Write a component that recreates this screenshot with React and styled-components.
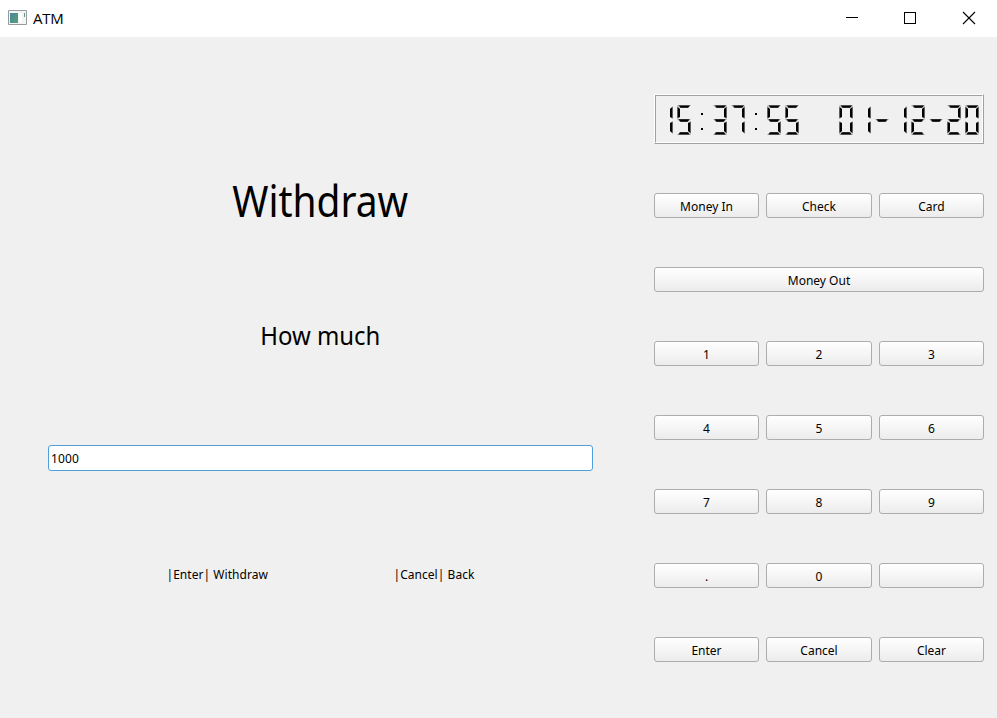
import React from "react";
import styled, { createGlobalStyle } from "styled-components";

const Global = createGlobalStyle`
  * { box-sizing: border-box; }
  body { margin: 0; background: #f0f0f0; color: #000; font-family: "Noto Sans", sans-serif; font-size: 12px; }
`;
const Window = styled.div`width: 997px; height: 718px; display: flex; flex-direction: column; overflow: hidden;`;
const TitleBar = styled.header`height: 37px; background: #fff; display: flex; align-items: flex-start; padding-left: 8px;`;
const AppIcon = styled.svg`display: block; margin: 10px 6px 0 0;`;
const Title = styled.span`flex: 1; font: 15px/36px "Open Sans", sans-serif; letter-spacing: -0.3px;`;
const Caption = styled.svg`display: block;`;
const Body = styled.main`height: 681px; display: flex;`;
const Screen = styled.section`width: 545px; margin-left: 48px; display: flex; flex-direction: column; align-items: center;`;
const Label = styled.div`
  font-size: ${(p) => p.$size}px; line-height: ${(p) => p.$height}px; margin-top: ${(p) => p.$top}px;
  transform: scaleX(${(p) => p.$stretch}); white-space: pre;
`;
const Field = styled.input`
  width: 545px; height: 26px; margin-top: 92px; padding: 1px 2px 0; border: 1px solid #4f9fdc; border-radius: 3px;
  background: #fff; color: #000; font: 12px "Noto Sans", sans-serif; letter-spacing: 0.15px; outline: none;
`;
const Hints = styled.div`width: 545px; margin-top: 94px; display: flex; padding-left: 118.5px; line-height: 20px; white-space: pre;`;
const Hint = styled.span`width: 227px; flex: none; letter-spacing: 0.04px;`;
const Panel = styled.section`
  width: 330px; margin-left: 61px; padding-top: 57px; display: flex; flex-direction: column;
`;
const Display = styled.div`
  height: 50px; margin-bottom: 49px; border: 1px solid; border-color: #fff #a0a0a0 #a0a0a0 #fff;
  display: flex;
`;
const Inner = styled.div`flex: 1; border: 1px solid; border-color: #a0a0a0 #fff #fff #a0a0a0;`;
const Digits = styled.svg`display: block;`;
const Keys = styled.div`display: grid; grid-template-columns: 105px 106px 105px; gap: 49px 7px;`;
const Key = styled.button`
  grid-column: ${(p) => (p.$wide ? "1 / -1" : "auto")}; height: 25px; padding: 2px 0 0; border: 1px solid #adadad;
  border-radius: 3px; background: linear-gradient(#fff, #ececec); color: #000; font: 12px/21px "Noto Sans", sans-serif;
`;

/* Each segment has a grey bevel outline and a black core. */
const SEGMENTS = {
  a: ["M0 0H14L11 3H3Z", "M2 .5H13L11 2.7H3.5Z"],
  b: ["M14 1V14L11 12V4Z", "M13.4 2V13L11 12V4Z"],
  c: ["M14 16V29L11 26V18Z", "M13.4 17V28L11 26V18Z"],
  d: ["M0 30H14L11 27H3Z", "M1.5 29.6H12.5L11 27.2H3Z"],
  e: ["M0 16V29L3 26V18Z", "M.6 17V28L3 26V18Z"],
  f: ["M0 1V14L3 12V4Z", "M.6 2V13L3 12V4Z"],
  g: ["M0 14H14L11 17H3Z", "M1.5 14.2H12.5L10.5 16.7H3.5Z"],
  p: ["", "M6 8h2v2h-2zM6 23h2v2h-2z"],
};
const GLYPHS = { 0: "abcdef", 1: "bc", 2: "abged", 3: "abgcd", 5: "afgcd", 7: "abc", "-": "g", ":": "p", " ": "" };

function Clock({ value }) {
  return (
    <Digits width="326" height="46" viewBox="656 96 326 46">
      {[...value].map((ch, i) => (
        <g key={i} transform={`translate(${659 + i * 18} 105)`}>
          {[...GLYPHS[ch]].map((s) => (
            <React.Fragment key={s}>
              <path d={SEGMENTS[s][0]} fill="#a0a0a0" />
              <path d={SEGMENTS[s][1]} fill="#000" />
            </React.Fragment>
          ))}
        </g>
      ))}
    </Digits>
  );
}

const KEYS = ["Money In", "Check", "Card", "Money Out", "1", "2", "3", "4", "5", "6", "7", "8", "9", ".", "0", "", "Enter", "Cancel", "Clear"];

export default function App() {
  return (
    <Window>
      <Global />
      <TitleBar>
        <AppIcon width="19" height="16" viewBox="0 0 19 16">
          <defs>
            <linearGradient id="pane" x1="0" y1="0" x2="1" y2="1">
              <stop stopColor="#4c83a0" />
              <stop offset="1" stopColor="#55a274" />
            </linearGradient>
          </defs>
          <path d="M.5.5h18v14H.5z" fill="#f3f5f5" stroke="#959b9e" />
          <path d="M2 3h8v10H2z" fill="url(#pane)" />
          <path d="M11 3h3v10h-3z" fill="#fff" />
          <path d="M16.5 3v4" stroke="#66927f" />
        </AppIcon>
        <Title>ATM</Title>
        <Caption width="152" height="37" viewBox="845 0 152 37" fill="none" stroke="#000">
          <path d="M846 17.5h12M904.5 12.5h11v11h-11z" shapeRendering="crispEdges" />
          <path d="M963 12l12 12M975 12l-12 12" strokeWidth="1.1" />
        </Caption>
      </TitleBar>
      <Body>
        <Screen>
          <Label $size={43} $height={60} $top={134} $stretch={0.905}>Withdraw</Label>
          <Label $size={26} $height={36} $top={86} $stretch={0.92}>How much</Label>
          <Field defaultValue="1000" />
          <Hints>
            <Hint>|Enter| Withdraw</Hint>
            <Hint>|Cancel| Back</Hint>
          </Hints>
        </Screen>
        <Panel>
          <Display><Inner><Clock value="15:37:55  01-12-20" /></Inner></Display>
          <Keys>
            {KEYS.map((k, i) => <Key key={i} $wide={k === "Money Out"}>{k}</Key>)}
          </Keys>
        </Panel>
      </Body>
    </Window>
  );
}
